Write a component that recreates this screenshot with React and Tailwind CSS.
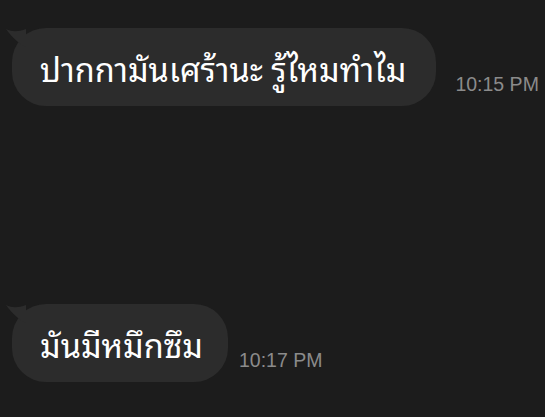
import React from "react";

const Tail = () => (
  <svg
    className="absolute left-[-8px] top-[-1px]"
    width="24"
    height="22"
    viewBox="0 0 24 22"
  >
    <path d="M2 2 C8 5 14 5 22 2 L22 20 C14 16 8 10 2 2 Z" fill="#2c2c2c" />
  </svg>
);

const Bubble = ({ text, time, padRight, gap }) => (
  <div className="flex items-end">
    <div className={`relative bg-[#2c2c2c] rounded-[34px] h-[78px] pl-[28px] flex items-center ${padRight}`}>
      <Tail />
      <span className="relative text-white text-[32.5px] leading-none">{text}</span>
    </div>
    <span className={`mb-[12px] text-[19.5px] leading-none text-[#8b8b8b] font-['Liberation_Sans',sans-serif] ${gap}`}>
      {time}
    </span>
  </div>
);

export default function App() {
  return (
    <div className="w-[545px] h-[417px] bg-[#1c1c1c] pl-[12px] pt-[28px] overflow-hidden font-['Noto_Sans_Thai_Looped','Noto_Serif_Thai','Noto_Sans_Thai','DejaVu_Sans',sans-serif]">
      <Bubble
        text="ปากกามันเศร้านะ รู้ไหมทำไม"
        time="10:15 PM"
        padRight="pr-[30px]"
        gap="ml-[19px]"
      />
      <div className="h-[198px]" />
      <Bubble
        text="มันมีหมึกซึม"
        time="10:17 PM"
        padRight="pr-[25px]"
        gap="ml-[11px]"
      />
    </div>
  );
}
